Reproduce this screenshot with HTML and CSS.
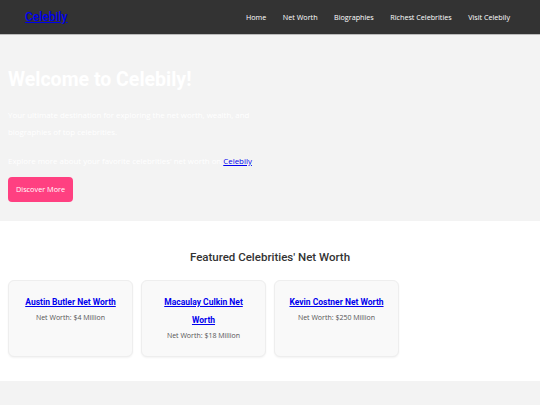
FILE: index.html
```html
<!DOCTYPE html>
<html lang="en">
<head>
<meta charset="utf-8">
<title>Celebily</title>
<link rel="stylesheet" href="styles.css">
</head>
<body>
<header class="topbar">
  <a class="logo" href="#">Celebily</a>
  <nav class="nav">
    <a href="#">Home</a>
    <a href="#">Net Worth</a>
    <a href="#">Biographies</a>
    <a href="#">Richest Celebrities</a>
    <a href="#">Visit Celebily</a>
  </nav>
</header>
<section class="hero">
  <h1>Welcome to Celebily!</h1>
  <p class="lead">Your ultimate destination for exploring the net worth, wealth, and biographies of top celebrities.</p>
  <p class="lead">Explore more about your favorite celebrities' net worth on <a href="#">Celebily</a></p>
  <a class="btn" href="#">Discover More</a>
</section>
<section class="featured">
  <h2>Featured Celebrities' Net Worth</h2>
  <div class="cards">
    <div class="card">
      <a href="#">Austin Butler Net Worth</a>
      <p>Net Worth: $4 Million</p>
    </div>
    <div class="card">
      <a href="#">Macaulay Culkin Net Worth</a>
      <p>Net Worth: $18 Million</p>
    </div>
    <div class="card">
      <a href="#">Kevin Costner Net Worth</a>
      <p>Net Worth: $250 Million</p>
    </div>
  </div>
</section>
<footer class="footer"></footer>
</body>
</html>
```
FILE: styles.css
```css
* { box-sizing: border-box; }
html, body { margin: 0; padding: 0; }
body {
  font-family: "Open Sans", "DejaVu Sans", sans-serif;
  background: #fff;
  color: #333;
}
.topbar {
  height: 35px;
  background: #333;
  border-bottom: 1px solid #bbb;
  display: flex;
  align-items: center;
  justify-content: space-between;
  padding: 0 30px 0 25px;
}
.logo {
  font-family: Roboto, "Open Sans", sans-serif;
  color: #0000ee;
  font-size: 12px;
  font-weight: 500;
  text-decoration: underline;
}
.nav {
  display: flex;
  gap: 16.5px;
}
.nav a {
  color: #fff;
  text-decoration: none;
  font-size: 7.2px;
}
.hero {
  background: #f3f3f3;
  padding: 30px 8px 18px;
  height: 186px;
}
.hero h1 {
  font-family: Roboto, "Open Sans", sans-serif;
  margin: 0 0 12px;
  color: #fff;
  font-size: 19.5px;
  font-weight: 700;
  line-height: 30px;
}
.lead {
  margin: 0 0 12px;
  color: #fff;
  font-size: 7.9px;
  line-height: 17px;
  max-width: 255px;
}
.lead + .lead {
  max-width: none;
  margin-bottom: 5px;
}
.lead a { color: #0000ee; }
.btn {
  display: inline-block;
  background: #ff4081;
  color: #fff;
  font-size: 7.3px;
  text-decoration: none;
  padding: 0 8px;
  line-height: 25px;
  border-radius: 4px;
}
.featured {
  padding: 24px 8px 24px;
  height: 160px;
}
.featured h2 {
  font-family: Roboto, "Open Sans", sans-serif;
  margin: 0 0 11px;
  text-align: center;
  font-size: 11.5px;
  font-weight: 500;
  line-height: 24px;
  color: #333;
}
.cards {
  display: flex;
  gap: 8px;
}
.card {
  width: 125px;
  height: 77px;
  background: #f9f9f9;
  border: 1px solid #eee;
  border-radius: 6px;
  box-shadow: 0 1px 2px rgba(0,0,0,0.05);
  padding: 12px 10px;
  text-align: center;
}
.card a {
  font-family: Roboto, "Open Sans", sans-serif;
  color: #0000ee;
  font-size: 8.5px;
  font-weight: 700;
  line-height: 18px;
  display: block;
}
.card p {
  margin: 0;
  font-size: 7px;
  line-height: 14px;
  color: #555;
}
.footer {
  background: #f3f3f3;
  height: 30px;
}
```
